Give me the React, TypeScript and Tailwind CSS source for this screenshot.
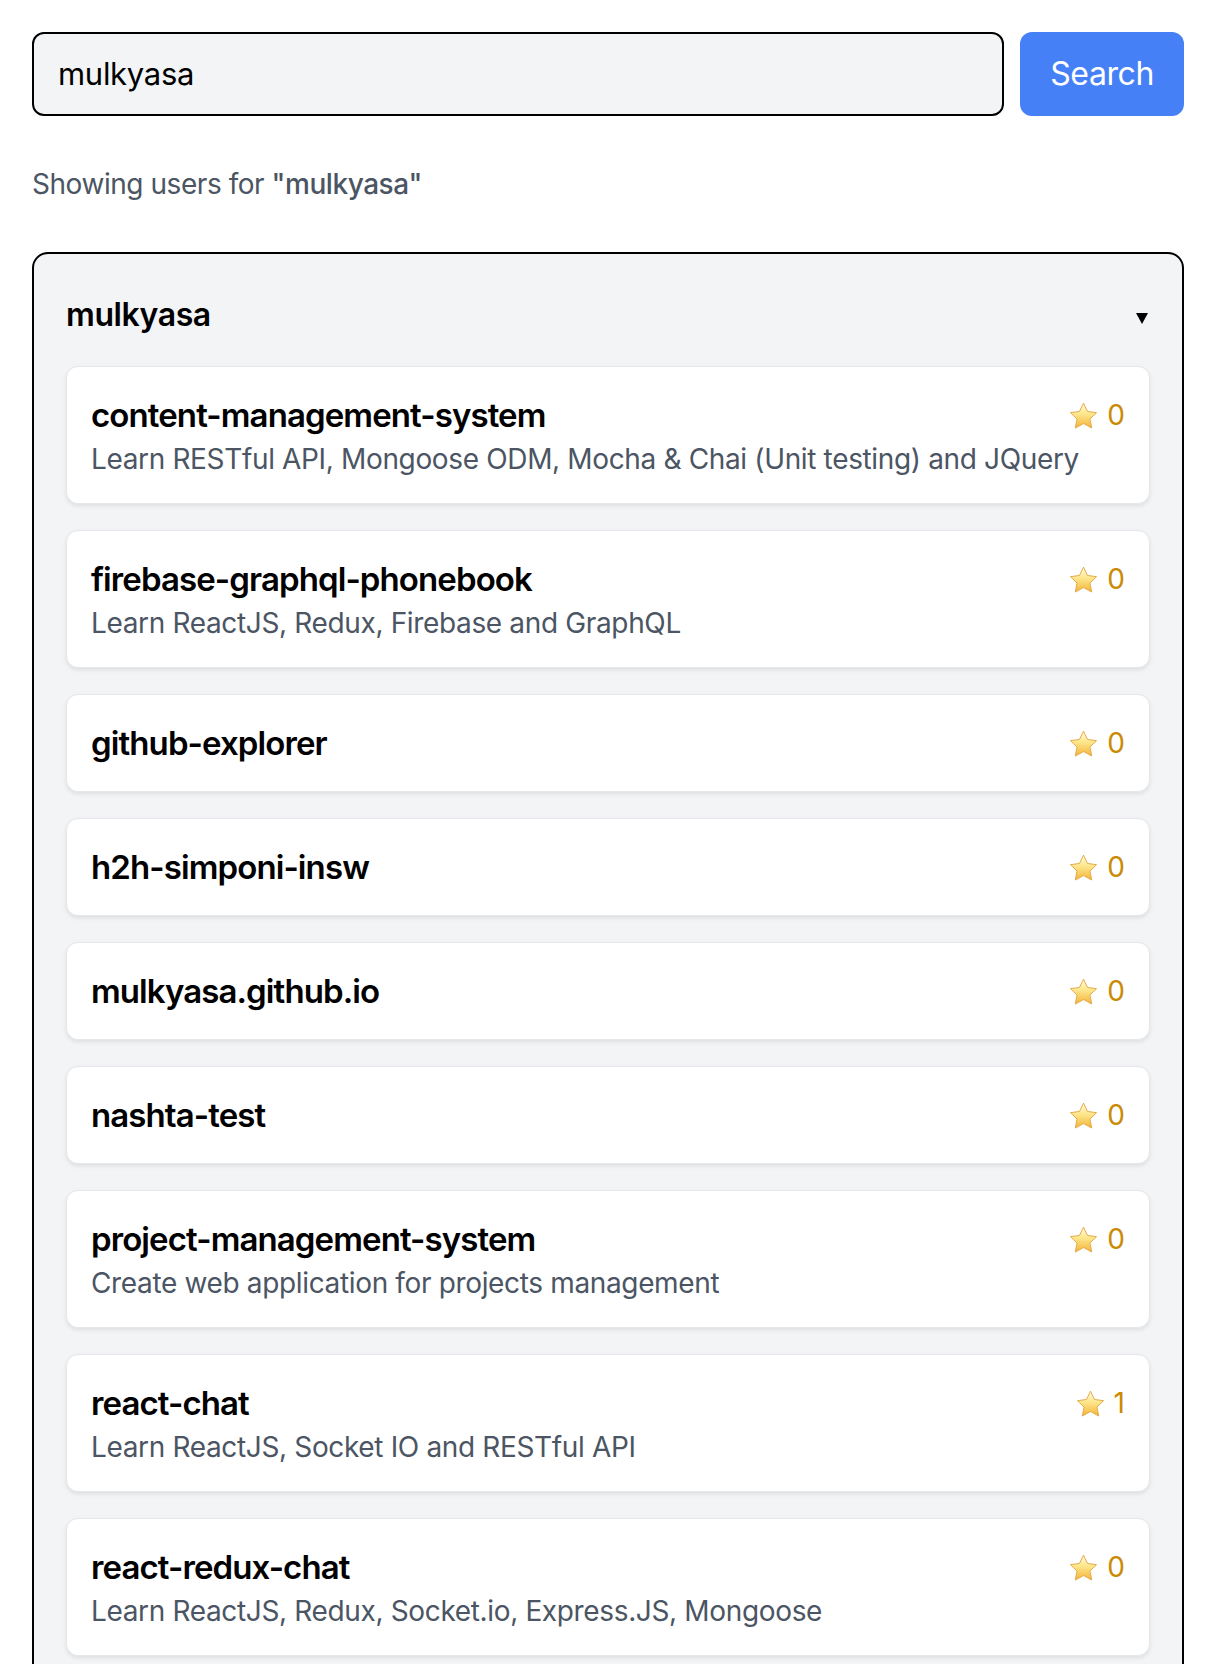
import { useId, useState } from "react";

interface Repo {
  name: string;
  description?: string;
  stars: number;
}

const repos: Repo[] = [
  {
    name: "content-management-system",
    description: "Learn RESTful API, Mongoose ODM, Mocha & Chai (Unit testing) and JQuery",
    stars: 0,
  },
  { name: "firebase-graphql-phonebook", description: "Learn ReactJS, Redux, Firebase and GraphQL", stars: 0 },
  { name: "github-explorer", stars: 0 },
  { name: "h2h-simponi-insw", stars: 0 },
  { name: "mulkyasa.github.io", stars: 0 },
  { name: "nashta-test", stars: 0 },
  { name: "project-management-system", description: "Create web application for projects management", stars: 0 },
  { name: "react-chat", description: "Learn ReactJS, Socket IO and RESTful API", stars: 1 },
  { name: "react-redux-chat", description: "Learn ReactJS, Redux, Socket.io, Express.JS, Mongoose", stars: 0 },
];

function Star() {
  const id = useId();
  return (
    <svg width="29" height="27" viewBox="1.2 1.2 21.6 19.6" className="shrink-0">
      <defs>
        <linearGradient id={id} x1="0" y1="0" x2="0" y2="1">
          <stop offset="0" stopColor="#fffbe3" />
          <stop offset="0.45" stopColor="#fde68a" />
          <stop offset="1" stopColor="#f4b43a" />
        </linearGradient>
      </defs>
      <path
        d="M12 1.8l3 6.2 6.7.9-4.9 4.7 1.3 6.7L12 17l-6.1 3.3 1.3-6.7-4.9-4.7 6.7-.9z"
        fill={`url(#${id})`}
        stroke="#e2a540"
        strokeWidth="0.7"
        strokeLinejoin="round"
      />
    </svg>
  );
}

function RepoCard({ repo }: { repo: Repo }) {
  return (
    <div className="rounded-[12px] border border-gray-200 bg-white px-6 py-6 shadow-[0_2px_4px_rgba(0,0,0,0.09)]">
      <div className="flex items-center justify-between gap-4">
        <div className="text-[33px] font-semibold leading-[48px] tracking-[-0.9px] text-black">{repo.name}</div>
        <div className="flex items-center gap-[9px] text-[28px] leading-[40px] text-[#ca8a04]">
          <Star />
          <span>{repo.stars}</span>
        </div>
      </div>
      {repo.description && (
        <div className="text-[28px] leading-[40px] tracking-[-0.35px] text-[#4b5563]">{repo.description}</div>
      )}
    </div>
  );
}

export default function App() {
  const [query, setQuery] = useState("mulkyasa");

  return (
    <div className="h-screen overflow-hidden bg-white py-8 pl-8 font-['Inter','Noto_Sans',sans-serif] text-black">
      <div className="w-[1152px]">
        <div className="flex gap-4">
          <input
            value={query}
            onChange={(e) => setQuery(e.target.value)}
            className="min-w-0 flex-1 rounded-[12px] border-2 border-black bg-gray-100 px-6 py-4 text-[31px] leading-[48px] tracking-[-0.3px] text-black outline-none"
          />
          <button className="rounded-[12px] bg-[#4680f7] px-[30px] text-[32px] leading-[48px] tracking-[-0.4px] text-white">
            Search
          </button>
        </div>

        <p className="mt-12 text-[28px] leading-[40px] tracking-[-0.45px] text-[#4b5563]">
          Showing users for <span className="font-medium">"mulkyasa"</span>
        </p>

        <div className="mt-12 rounded-2xl border-2 border-black bg-gray-100 p-8">
          <div className="mb-8 flex h-12 items-end justify-between">
            <div className="text-[32px] font-semibold leading-[38px] tracking-[-0.4px]">mulkyasa</div>
            <svg width="12" height="11" viewBox="0 0 12 11" className="mb-[10px] mr-[2px]">
              <polygon points="0,0 12,0 6,11" fill="#000" />
            </svg>
          </div>
          <div className="flex flex-col gap-[26px]">
            {repos.map((repo) => (
              <RepoCard key={repo.name} repo={repo} />
            ))}
          </div>
        </div>
      </div>
    </div>
  );
}
